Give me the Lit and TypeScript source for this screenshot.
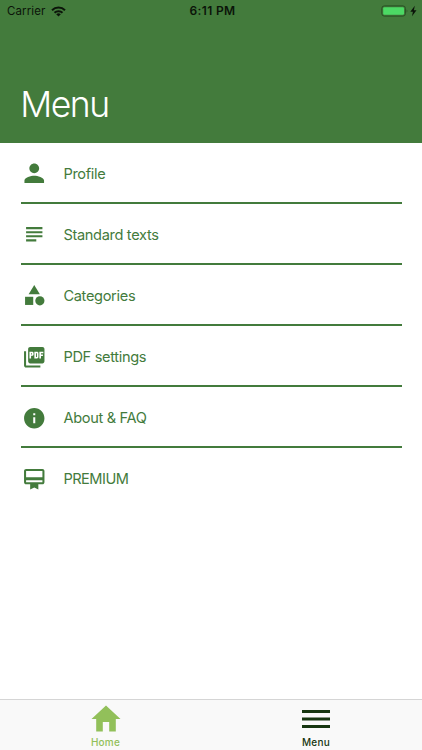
import { LitElement, html, css, svg } from "lit";
import { customElement } from "lit/decorators.js";

const icons = {
  person: svg`<g transform="translate(12 12) scale(1.2) translate(-12 -12)"><path d="M12 12c2.210 0 4-1.790 4-4s-1.790-4-4-4-4 1.790-4 4 1.790 4 4 4zm0 2c-2.670 0-8 1.340-8 4v2h16v-2c0-2.660-5.330-4-8-4z"/></g>`,
  subject: svg`<path d="M14 17H4v2h10v-2zm6-8H4v2h16V9zM4 15h16v-2H4v2zM4 5v2h16V5H4z"/>`,
  category: svg`<path d="M12 2l-5.500 9h11z"/><circle cx="17.500" cy="17.500" r="4.500"/><path d="M3 13.500h8v8H3z"/>`,
  pdf: svg`<path fill-rule="evenodd" d="M20 2H8c-1.100 0-2 .9-2 2v12c0 1.100.9 2 2 2h12c1.100 0 2-.9 2-2V4c0-1.100-.9-2-2-2zM7.300 6.500h2.600c.8 0 1.400.6 1.400 1.400v1.300c0 .8-.6 1.400-1.400 1.400H8.900v2.600H7.300zM8.900 8v1.200h.9V8zM12.100 6.500h2.600c.8 0 1.400.6 1.400 1.400v3.900c0 .8-.6 1.400-1.400 1.400h-2.600zM13.700 8v3.700h.9V8zM17 6.500h3.900v1.500h-2.300v1.200h1.900v1.500h-1.900v2.500H17z"/><path d="M4 6H2v14c0 1.100.9 2 2 2h14v-2H4V6z"/>`,
  info: svg`<path d="M12 2C6.480 2 2 6.480 2 12s4.480 10 10 10 10-4.480 10-10S17.520 2 12 2zm1 15h-2v-6h2v6zm0-8h-2V7h2v2z"/>`,
  membership: svg`<path d="M20 2H4c-1.110 0-2 .89-2 2v11c0 1.110.89 2 2 2h4v5l4-2 4 2v-5h4c1.110 0 2-.89 2-2V4c0-1.110-.89-2-2-2zm0 13H4v-2h16v2zm0-5H4V4h16v6z"/>`,
};

const items = [
  { label: "Profile", icon: icons.person },
  { label: "Standard texts", icon: icons.subject },
  { label: "Categories", icon: icons.category },
  { label: "PDF settings", icon: icons.pdf },
  { label: "About & FAQ", icon: icons.info },
  { label: "PREMIUM", icon: icons.membership },
];

@customElement("app-root")
export class AppRoot extends LitElement {
  static styles = css`
    :host {
      display: flex;
      flex-direction: column;
      height: 750px;
      background: #fff;
      color: #437b3c;
      font-family: Inter, "Liberation Sans", sans-serif;
    }
    * { box-sizing: border-box; }
    svg { display: block; }
    header {
      height: 142.500px;
      flex: none;
      background: #437b3c;
      display: flex;
      flex-direction: column;
      justify-content: space-between;
    }
    .status {
      display: grid;
      grid-template-columns: 1fr auto 1fr;
      align-items: center;
      height: 22px;
      padding: 0 5px 0 7px;
      color: #0b1409;
      font-size: 11.500px;
      letter-spacing: 0.100px;
    }
    .carrier { display: flex; align-items: center; gap: 5.500px; }
    .time { font-weight: 600; font-size: 12px; line-height: 14px; letter-spacing: 0.350px; padding: 0 0 1px 1px; }
    .battery { justify-self: end; }
    h1 {
      margin: 0 0 15.500px 20.300px;
      font-weight: 350;
      font-size: 35.500px;
      line-height: 44px;
      letter-spacing: -1.500px;
      color: #fff;
    }
    ul { list-style: none; margin: 0; padding: 0 20.500px; flex: 1; }
    li {
      height: 61.100px;
      display: flex;
      align-items: center;
      gap: 17px;
      padding: 3px 0 0 1px;
      border-bottom: 2px solid #437b3c;
      font-size: 14.600px;
      letter-spacing: -0.330px;
    }
    li:last-child { border-bottom: 0; padding-bottom: 2px; letter-spacing: -0.520px; }
    .icon { width: 24.500px; height: 24.500px; fill: currentColor; overflow: visible; margin-left: 0.400px; }
    nav {
      height: 51px;
      flex: none;
      display: grid;
      grid-template-columns: 1fr 1fr;
      background: #f9f9f9;
      border-top: 1px solid #d5d5d5;
      font-size: 10px;
      font-weight: 500;
      letter-spacing: 0.250px;
    }
    .tab { display: flex; flex-direction: column; align-items: center; color: #163610; padding-right: 1px; }
    .tab.home { color: #92c05a; padding-right: 0; }
    .glyph { width: 30px; height: 27px; margin: 5px 0 3px; fill: currentColor; }
    .label { line-height: 14px; }
  `;

  render() {
    return html`
      <header>
        <div class="status">
          <div class="carrier">
            <span>Carrier</span>
            <svg width="15" height="11" viewBox="0 0 15 11" fill="none" stroke="#0b1409" stroke-width="2">
              <path d="M1 4.200a9.300 9.300 0 0 1 13 0M3.500 6.800a5.700 5.700 0 0 1 8 0" />
              <path d="M7.500 10.600L5.200 8.300a3.300 3.300 0 0 1 4.600 0z" fill="#0b1409" stroke="none" />
            </svg>
          </div>
          <span class="time">6:11 PM</span>
          <svg class="battery" width="36" height="12" viewBox="0 0 36 12">
            <rect x=".8" y=".9" width="23.600" height="10.200" rx="2.500" fill="none" stroke="#285023" />
            <rect x="2.200" y="2.300" width="20.800" height="7.400" rx="1.200" fill="#4cd964" />
            <path d="M25.700 4.200q1.500 1.800 0 3.600z" fill="#285023" />
            <path d="M33.800.8l-4.500 5.900h2.600l-.9 4.500 4.500-6h-2.600z" fill="#0b1409" />
          </svg>
        </div>
        <h1>Menu</h1>
      </header>
      <ul>
        ${items.map(
          (item) => html`<li>
            <svg class="icon" viewBox="0 0 24 24">${item.icon}</svg>
            <span>${item.label}</span>
          </li>`
        )}
      </ul>
      <nav>
        <div class="tab home">
          <svg class="glyph" viewBox="0 0 30 27"><path d="M15 .5L.5 14h4.700V26.500h6.600V17h6.400v9.500h6.600V14h4.700z" /></svg>
          <span class="label">Home</span>
        </div>
        <div class="tab">
          <svg class="glyph" viewBox="0 0 30 27"><path d="M1 5h28v3H1zM1 12.500h28v3H1zM1 20h28v3H1z" /></svg>
          <span class="label">Menu</span>
        </div>
      </nav>
    `;
  }
}
